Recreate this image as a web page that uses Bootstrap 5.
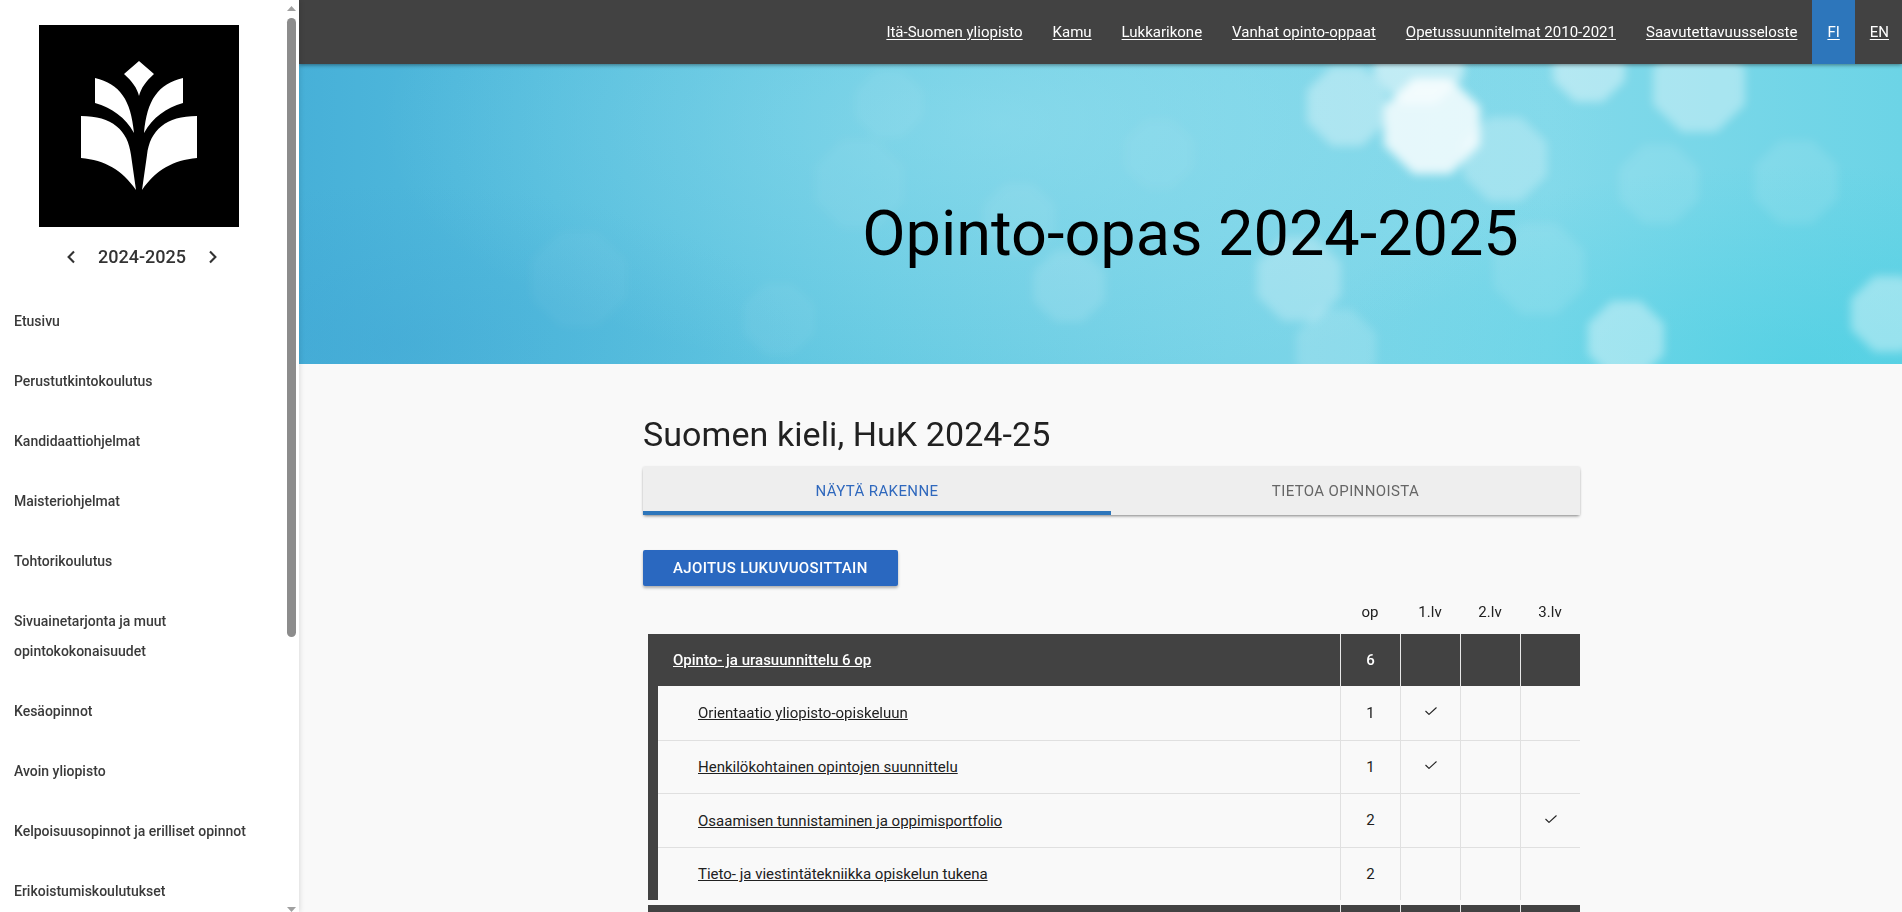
<!DOCTYPE html>
<html lang="fi">
<head>
<meta charset="utf-8">
<title>Opinto-opas 2024-2025</title>
<link href="https://cdn.jsdelivr.net/npm/bootstrap@5.3.0/dist/css/bootstrap.min.css" rel="stylesheet">
<style>
html,body{height:100%;overflow:hidden}
body{font-family:Roboto,"Liberation Sans",sans-serif;background:#f9f9f9;color:#212121;font-size:15px}
.side-drawer{width:299px;flex:0 0 299px;height:100vh;overflow:hidden;background:#fff;box-shadow:1px 0 5px rgba(0,0,0,.12);z-index:3}
.side-body{flex:1 1 auto;min-width:0}
.side-rail{flex:0 0 15px;width:15px;padding:0 3px}
.rail-up{display:block;margin:6px 0 7px}
.rail-down{display:block;margin-top:auto}
.rail-thumb{height:619px;background:#8c8c8c;border-radius:5px}
.logo-box{display:block;width:200px;height:202px;margin:25px 0 0 39px}
.year-row{height:60px;margin-bottom:4px;color:#333;font-size:18px;font-weight:500}
.year-row span{width:132px;text-align:center;line-height:60px}
.side-link{display:block;padding:15px 14px;line-height:30px;color:#3a3a3a;font-weight:500;font-size:14px;text-decoration:none}
.main-pane{min-width:0;height:100vh;overflow:hidden}
.top-strip{height:64px;background:#424242;box-shadow:0 1px 4px rgba(0,0,0,.45);position:relative;z-index:2}
.top-strip a{color:#fff;font-size:15px;padding:0 15px;line-height:64px;display:block;height:64px;text-underline-offset:2px}
.top-strip a:last-child{padding-right:13px}
.top-strip a.lang-on{background:#2d76bb}
.hero-band{height:300px;display:grid;background:radial-gradient(ellipse 620px 260px at 700px 60px,rgba(170,232,243,.4),transparent),radial-gradient(ellipse 500px 200px at 1500px 300px,rgba(60,205,225,.5),transparent),radial-gradient(ellipse 400px 160px at 100px 280px,rgba(60,160,210,.35),transparent),linear-gradient(90deg,#47b0d8 0%,#54bddd 16%,#66cae2 36%,#78d3e7 58%,#82d9ea 78%,#6cd4e6 100%)}
.hero-band>*{grid-area:1/1}
.hero-art{width:100%;height:100%;display:block}
.hero-title{font-size:63px;font-weight:400;color:#000;margin:0;align-self:center;justify-self:center;padding:38px 0 0 180px;line-height:1}
.page-col{width:937px;margin-left:344px}
.page-title{font-size:34px;font-weight:400;line-height:40px;margin:50px 0 13px;color:#212121;letter-spacing:.08px}
.tab-bar{height:48px;background:#eee;box-shadow:0 2px 3px -1px rgba(0,0,0,.45),0 0 2px rgba(0,0,0,.12)}
.tab-item{flex:1 1 0;text-align:center;line-height:48px;font-size:15px;font-weight:400;letter-spacing:.38px;color:#666;height:48px;text-decoration:none}
.tab-item.is-on{flex:0 0 468px;color:#2f68bd;border-bottom:4px solid #2d76bb}
.cta-btn{background:#2a68c0;color:#fff;font-size:15px;font-weight:500;letter-spacing:.36px;height:36px;padding:0 30px;border:0;border-radius:2px;box-shadow:0 2px 3px rgba(0,0,0,.3);margin-top:35px;display:block}
.study-table{width:932px;margin-left:5px;table-layout:fixed;border-collapse:separate;border-spacing:0;font-size:15px;margin-top:14px}
.study-table th{font-weight:400;text-align:center;height:34px;padding:0 0 10px;font-size:15px;vertical-align:middle}
.study-table .bandw{width:10px}
.study-table .colw{width:60px}
.study-table td{text-align:center;vertical-align:middle;padding:0;border-left:1px solid #e0e0e0;border-bottom:1px solid #e0e0e0}
.study-table td.band-cell{background:#424242;border:0}
.study-table td.name-cell{text-align:left;padding:1px 0 0 40px;border-left:0}
.study-table td a{color:#212121}
.study-table tr.last-sub td{border-bottom:0}
.study-table tr.group-row td{background:#424242;color:#fff;height:52px;font-weight:500;border-left:1px solid #e8e8e8;border-bottom:0}
.study-table tr.group-row td.name-cell{border-left:0;padding:0 0 0 25px}
.study-table tr.group-row a{color:#fff}
.study-table tr.row-1 td{height:55px}
.study-table tr.row-2 td{height:53px}
.study-table tr.row-3 td{height:54px}
.study-table tr.row-4 td{height:52px}
.study-table tr.gap-row td{height:5px;border:0}
.tick-mark{display:block;margin:0 auto 4px}
</style>
</head>
<body class="d-flex">
<aside class="side-drawer d-flex">
  <div class="side-body">
    <svg class="logo-box" viewBox="39 25 200 202" role="img" aria-label="Logo">
      <rect x="39" y="25" width="200" height="202" fill="#000"/>
      <g fill="#fff">
        <path d="M139 61 L154 74 C146 81 141 88 139 96 C137 88 132 81 124 74 Z"/>
        <path d="M95 78 C120 84 131 100 134 133 C125 117 112 108 95 103 Z"/>
        <path d="M183 78 C158 84 147 100 144 133 C153 117 166 108 183 103 Z"/>
        <path d="M81 116 C112 116 128 130 131 155 L136 190 C122 170 105 160 81 158 Z"/>
        <path d="M197 116 C166 116 150 130 147 155 L142 190 C156 170 173 160 197 158 Z"/>
      </g>
    </svg>
    <div class="year-row d-flex align-items-center justify-content-center">
      <svg width="10" height="14" viewBox="0 0 10 14"><path d="M8 1.5 L2.6 7 L8 12.5" fill="none" stroke="#333" stroke-width="2.1"/></svg>
      <span>2024-2025</span>
      <svg width="10" height="14" viewBox="0 0 10 14"><path d="M2 1.5 L7.4 7 L2 12.5" fill="none" stroke="#333" stroke-width="2.1"/></svg>
    </div>
    <nav>
      <a class="side-link" href="#">Etusivu</a>
      <a class="side-link" href="#">Perustutkintokoulutus</a>
      <a class="side-link" href="#">Kandidaattiohjelmat</a>
      <a class="side-link" href="#">Maisteriohjelmat</a>
      <a class="side-link" href="#">Tohtorikoulutus</a>
      <a class="side-link" href="#">Sivuainetarjonta ja muut opintokokonaisuudet</a>
      <a class="side-link" href="#">Kesäopinnot</a>
      <a class="side-link" href="#">Avoin yliopisto</a>
      <a class="side-link" href="#">Kelpoisuusopinnot ja erilliset opinnot</a>
      <a class="side-link" href="#">Erikoistumiskoulutukset</a>
    </nav>
  </div>
  <div class="side-rail d-flex flex-column" aria-hidden="true">
    <svg class="rail-up" width="9" height="5" viewBox="0 0 9 5"><path d="M4.5 0 L9 5 L0 5 Z" fill="#a0a0a0"/></svg>
    <div class="rail-thumb"></div>
    <svg class="rail-down" width="9" height="5" viewBox="0 0 9 5"><path d="M0 0 L9 0 L4.5 5 Z" fill="#a0a0a0"/></svg>
  </div>
</aside>
<main class="main-pane flex-grow-1">
  <div class="top-strip d-flex justify-content-end">
    <a href="#">Itä-Suomen yliopisto</a>
    <a href="#">Kamu</a>
    <a href="#">Lukkarikone</a>
    <a href="#">Vanhat opinto-oppaat</a>
    <a href="#">Opetussuunnitelmat 2010-2021</a>
    <a href="#">Saavutettavuusseloste</a>
    <a class="lang-on" href="#">FI</a>
    <a href="#">EN</a>
  </div>
  <div class="hero-band">
    <svg class="hero-art" viewBox="0 0 1603 300" preserveAspectRatio="none" aria-hidden="true">
      <defs>
        <filter id="soft" x="-20%" y="-20%" width="140%" height="140%"><feGaussianBlur stdDeviation="5"/></filter>
        <polygon id="oct" points="-.38,-1 .38,-1 1,-.4 1,.4 .38,1 -.38,1 -1,.4 -1,-.4"/>
      </defs>
      <g fill="#fff" filter="url(#soft)">
        <use href="#oct" transform="translate(1133 62) scale(48)" opacity=".8"/>
        <use href="#oct" transform="translate(1120 -5) scale(45)" opacity=".5"/>
        <use href="#oct" transform="translate(1048 42) scale(40)" opacity=".34"/>
        <use href="#oct" transform="translate(1206 95) scale(42)" opacity=".26"/>
        <use href="#oct" transform="translate(1400 22) scale(46)" opacity=".36"/>
        <use href="#oct" transform="translate(1290 2) scale(36)" opacity=".4"/>
        <use href="#oct" transform="translate(1497 118) scale(42)" opacity=".1"/>
        <use href="#oct" transform="translate(1360 120) scale(40)" opacity=".1"/>
        <use href="#oct" transform="translate(770 222) scale(36)" opacity=".13"/>
        <use href="#oct" transform="translate(720 155) scale(36)" opacity=".07"/>
        <use href="#oct" transform="translate(1000 215) scale(42)" opacity=".26"/>
        <use href="#oct" transform="translate(1037 285) scale(40)" opacity=".16"/>
        <use href="#oct" transform="translate(1327 275) scale(38)" opacity=".38"/>
        <use href="#oct" transform="translate(1590 250) scale(38)" opacity=".38"/>
        <use href="#oct" transform="translate(560 120) scale(45)" opacity=".05"/>
        <use href="#oct" transform="translate(590 40) scale(34)" opacity=".06"/>
        <use href="#oct" transform="translate(280 215) scale(48)" opacity=".04"/>
        <use href="#oct" transform="translate(480 255) scale(36)" opacity=".05"/>
        <use href="#oct" transform="translate(1240 205) scale(46)" opacity=".1"/>
        <use href="#oct" transform="translate(860 90) scale(36)" opacity=".05"/>
      </g>
    </svg>
    <h2 class="hero-title">Opinto-opas 2024-2025</h2>
  </div>
  <div class="page-col">
    <h1 class="page-title">Suomen kieli, HuK 2024-25</h1>
    <div class="tab-bar d-flex">
      <a class="tab-item is-on" href="#">NÄYTÄ RAKENNE</a>
      <a class="tab-item" href="#">TIETOA OPINNOISTA</a>
    </div>
    <button class="cta-btn" type="button">AJOITUS LUKUVUOSITTAIN</button>
    <table class="study-table">
      <colgroup><col class="bandw"><col><col class="colw"><col class="colw"><col class="colw"><col class="colw"></colgroup>
      <thead><tr><th colspan="2"></th><th>op</th><th>1.lv</th><th>2.lv</th><th>3.lv</th></tr></thead>
      <tbody>
        <tr class="group-row"><td class="name-cell" colspan="2"><a href="#">Opinto- ja urasuunnittelu 6 op</a></td><td>6</td><td></td><td></td><td></td></tr>
        <tr class="row-1"><td class="band-cell"></td><td class="name-cell"><a href="#">Orientaatio yliopisto-opiskeluun</a></td><td>1</td><td><svg class="tick-mark" width="12" height="8" viewBox="0 0 12 8"><path d="M.5 4 L4 7.4 L11.5 .5" fill="none" stroke="#222" stroke-width="1.1"/></svg></td><td></td><td></td></tr>
        <tr class="row-2"><td class="band-cell"></td><td class="name-cell"><a href="#">Henkilökohtainen opintojen suunnittelu</a></td><td>1</td><td><svg class="tick-mark" width="12" height="8" viewBox="0 0 12 8"><path d="M.5 4 L4 7.4 L11.5 .5" fill="none" stroke="#222" stroke-width="1.1"/></svg></td><td></td><td></td></tr>
        <tr class="row-3"><td class="band-cell"></td><td class="name-cell"><a href="#">Osaamisen tunnistaminen ja oppimisportfolio</a></td><td>2</td><td></td><td></td><td><svg class="tick-mark" width="12" height="8" viewBox="0 0 12 8"><path d="M.5 4 L4 7.4 L11.5 .5" fill="none" stroke="#222" stroke-width="1.1"/></svg></td></tr>
        <tr class="row-4 last-sub"><td class="band-cell"></td><td class="name-cell"><a href="#">Tieto- ja viestintätekniikka opiskelun tukena</a></td><td>2</td><td></td><td></td><td></td></tr>
        <tr class="gap-row"><td colspan="6"></td></tr>
        <tr class="group-row"><td class="name-cell" colspan="2"></td><td></td><td></td><td></td><td></td></tr>
      </tbody>
    </table>
  </div>
</main>
<script src="https://cdn.jsdelivr.net/npm/bootstrap@5.3.0/dist/js/bootstrap.bundle.min.js"></script>
</body>
</html>
